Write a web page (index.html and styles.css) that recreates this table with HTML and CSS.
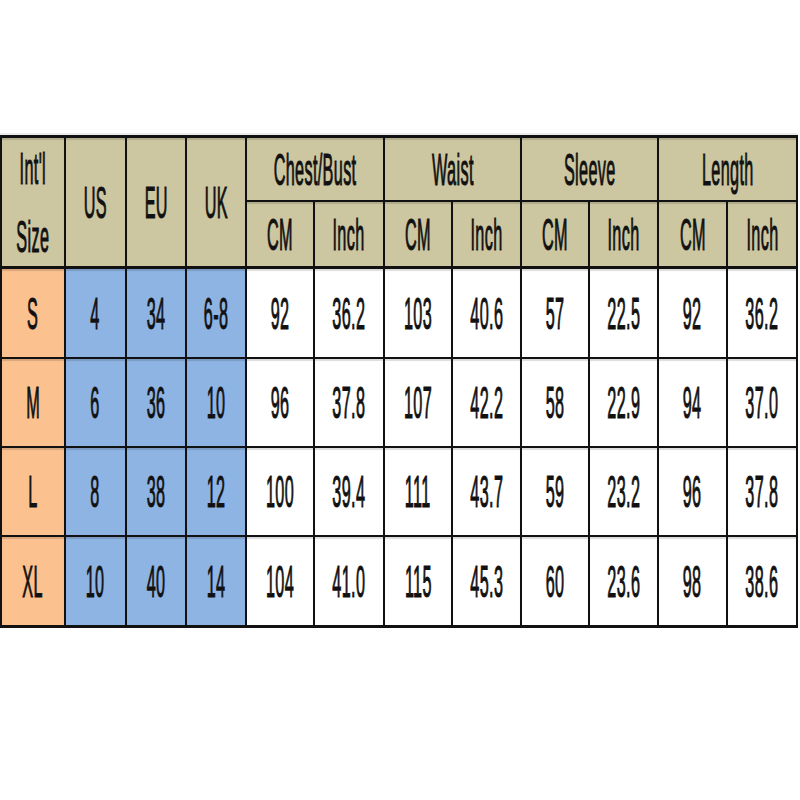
FILE: index.html
```html
<!DOCTYPE html>
<html>
<head>
<meta charset="utf-8">
<link rel="stylesheet" href="styles.css">
</head>
<body>
<div class="page">
<table class="chart">
<colgroup>
<col class="w66"><col class="w61"><col class="w60"><col class="w60">
<col class="w68"><col class="w70"><col class="w68"><col class="w69">
<col class="w68"><col class="w69"><col class="w69"><col class="w70">
</colgroup>
<thead>
<tr class="h1">
<th rowspan="2" class="first top hb"><div class="c col"><span class="t">Int'l</span><span class="t">Size</span></div></th>
<th rowspan="2" class="top hb"><div class="c"><span class="t">US</span></div></th>
<th rowspan="2" class="top hb"><div class="c"><span class="t">EU</span></div></th>
<th rowspan="2" class="top hb"><div class="c"><span class="t">UK</span></div></th>
<th colspan="2" class="top"><div class="c"><span class="t">Chest/Bust</span></div></th>
<th colspan="2" class="top"><div class="c"><span class="t">Waist</span></div></th>
<th colspan="2" class="top"><div class="c"><span class="t">Sleeve</span></div></th>
<th colspan="2" class="top"><div class="c"><span class="t">Length</span></div></th>
</tr>
<tr class="h2">
<th class="hb"><div class="c"><span class="t">CM</span></div></th>
<th class="hb"><div class="c"><span class="t">Inch</span></div></th>
<th class="hb"><div class="c"><span class="t">CM</span></div></th>
<th class="hb"><div class="c"><span class="t">Inch</span></div></th>
<th class="hb"><div class="c"><span class="t">CM</span></div></th>
<th class="hb"><div class="c"><span class="t">Inch</span></div></th>
<th class="hb"><div class="c"><span class="t">CM</span></div></th>
<th class="hb"><div class="c"><span class="t">Inch</span></div></th>
</tr>
</thead>
<tbody>
<tr class="r1">
<td class="first size"><div class="c"><span class="t">S</span></div></td>
<td class="reg"><div class="c"><span class="t">4</span></div></td>
<td class="reg"><div class="c"><span class="t">34</span></div></td>
<td class="reg"><div class="c"><span class="t">6-8</span></div></td>
<td><div class="c"><span class="t">92</span></div></td>
<td><div class="c"><span class="t">36.2</span></div></td>
<td><div class="c"><span class="t">103</span></div></td>
<td><div class="c"><span class="t">40.6</span></div></td>
<td><div class="c"><span class="t">57</span></div></td>
<td><div class="c"><span class="t">22.5</span></div></td>
<td><div class="c"><span class="t">92</span></div></td>
<td><div class="c"><span class="t">36.2</span></div></td>
</tr>
<tr class="r2">
<td class="first size"><div class="c"><span class="t">M</span></div></td>
<td class="reg"><div class="c"><span class="t">6</span></div></td>
<td class="reg"><div class="c"><span class="t">36</span></div></td>
<td class="reg"><div class="c"><span class="t">10</span></div></td>
<td><div class="c"><span class="t">96</span></div></td>
<td><div class="c"><span class="t">37.8</span></div></td>
<td><div class="c"><span class="t">107</span></div></td>
<td><div class="c"><span class="t">42.2</span></div></td>
<td><div class="c"><span class="t">58</span></div></td>
<td><div class="c"><span class="t">22.9</span></div></td>
<td><div class="c"><span class="t">94</span></div></td>
<td><div class="c"><span class="t">37.0</span></div></td>
</tr>
<tr class="r3">
<td class="first size"><div class="c"><span class="t">L</span></div></td>
<td class="reg"><div class="c"><span class="t">8</span></div></td>
<td class="reg"><div class="c"><span class="t">38</span></div></td>
<td class="reg"><div class="c"><span class="t">12</span></div></td>
<td><div class="c"><span class="t">100</span></div></td>
<td><div class="c"><span class="t">39.4</span></div></td>
<td><div class="c"><span class="t">111</span></div></td>
<td><div class="c"><span class="t">43.7</span></div></td>
<td><div class="c"><span class="t">59</span></div></td>
<td><div class="c"><span class="t">23.2</span></div></td>
<td><div class="c"><span class="t">96</span></div></td>
<td><div class="c"><span class="t">37.8</span></div></td>
</tr>
<tr class="r4">
<td class="first size last"><div class="c"><span class="t">XL</span></div></td>
<td class="reg last"><div class="c"><span class="t">10</span></div></td>
<td class="reg last"><div class="c"><span class="t">40</span></div></td>
<td class="reg last"><div class="c"><span class="t">14</span></div></td>
<td class="last"><div class="c"><span class="t">104</span></div></td>
<td class="last"><div class="c"><span class="t">41.0</span></div></td>
<td class="last"><div class="c"><span class="t">115</span></div></td>
<td class="last"><div class="c"><span class="t">45.3</span></div></td>
<td class="last"><div class="c"><span class="t">60</span></div></td>
<td class="last"><div class="c"><span class="t">23.6</span></div></td>
<td class="last"><div class="c"><span class="t">98</span></div></td>
<td class="last"><div class="c"><span class="t">38.6</span></div></td>
</tr>
</tbody>
</table>
</div>
</body>
</html>
```
FILE: styles.css
```css
html, body {
  margin: 0;
  padding: 0;
  background: #ffffff;
}
.page {
  padding-top: 135px;
  width: 800px;
}
.chart {
  table-layout: fixed;
  width: 798px;
  border-collapse: separate;
  border-spacing: 0;
  font-family: "Liberation Sans", Arial, sans-serif;
  font-weight: normal;
  color: #111111;
  box-shadow: 0 2px 0 #c4c4c4, 0 -2px 0 #ececec;
}
.w66 { width: 66px; }
.w61 { width: 61px; }
.w60 { width: 60px; }
.w68 { width: 68px; }
.w69 { width: 69px; }
.w70 { width: 70px; }

.chart th, .chart td {
  padding: 0;
  border-right: 2px solid #111;
  border-bottom: 2px solid #111;
  text-align: center;
  vertical-align: middle;
  overflow: visible;
  box-shadow: inset 0 2px 1px rgba(0, 0, 0, 0.14);
}
.chart th {
  background: #ccc6a1;
  font-weight: normal;
}
.chart td {
  background: #ffffff;
}
.chart .first { border-left: 2px solid #111; }
.chart .top { border-top: 3px solid #111; }
.chart .hb { border-bottom: 3px solid #111; }
.chart .last { border-bottom: 3px solid #111; }
.chart td.size { background: #fbc18f; }
.chart td.reg { background: #8eb4e3; }

.h1 { height: 67px; }
.h2 { height: 67px; }
.r1 { height: 90px; }
.r2 { height: 89px; }
.r3 { height: 89px; }
.r4 { height: 91px; }

.c {
  display: flex;
  justify-content: center;
  align-items: center;
}
.c.col {
  flex-direction: column;
  gap: 23px;
}
.t {
  display: inline-block;
  white-space: nowrap;
  font-size: 45px;
  line-height: 45px;
  letter-spacing: 1px;
  -webkit-text-stroke: 1.1px #111111;
  transform: scaleX(0.36);
  transform-origin: center center;
}
```
